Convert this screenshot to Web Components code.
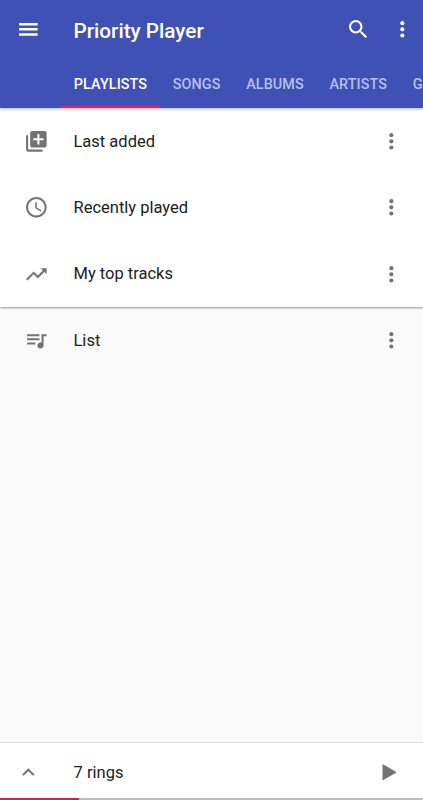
<!DOCTYPE html>
<html lang="en">
<head>
<meta charset="UTF-8">
<title>Priority Player</title>
<style>
  body { margin: 0; font-family: Roboto, 'Liberation Sans', sans-serif; }
</style>
</head>
<body>
<player-app></player-app>

<script>
const ICONS = {
  menu: '<path d="M3 18.2h18v-2.4H3v2.4zm0-5h18v-2.4H3v2.4zm0-7.4v2.4h18V5.8H3z"/>',
  search: '<path d="M15.5 14h-.79l-.28-.27C15.41 12.59 16 11.11 16 9.5 16 5.91 13.09 3 9.5 3S3 5.91 3 9.5 5.91 16 9.5 16c1.61 0 3.09-.59 4.23-1.57l.27.28v.79l5 4.99L20.49 19l-4.99-5zm-6 0C7.01 14 5 11.99 5 9.5S7.01 5 9.5 5 14 7.01 14 9.5 11.99 14 9.5 14z"/>',
  more: '<circle cx="12" cy="6" r="2"/><circle cx="12" cy="12" r="2"/><circle cx="12" cy="18" r="2"/>',
  add: '<path d="M4 6H2v14c0 1.1.9 2 2 2h14v-2H4V6zm16-4H8c-1.1 0-2 .9-2 2v12c0 1.1.9 2 2 2h12c1.1 0 2-.9 2-2V4c0-1.1-.9-2-2-2zm-1 9h-4v4h-2v-4H9V9h4V5h2v4h4v2z"/>',
  clock: '<path d="M11.99 2C6.47 2 2 6.48 2 12s4.47 10 9.99 10C17.52 22 22 17.52 22 12S17.52 2 11.99 2zM12 20c-4.42 0-8-3.58-8-8s3.58-8 8-8 8 3.58 8 8-3.58 8-8 8zm.5-13H11v6l5.25 3.15.75-1.23-4.5-2.67z"/>',
  trending: '<path d="M16 6l2.29 2.29-4.88 4.88-4-4L2 16.59 3.41 18l6-6 4 4 6.3-6.29L22 12V6z"/>',
  queue: '<path d="M15 6H3v2h12V6zm0 4H3v2h12v-2zM3 16h8v-2H3v2zM17 6v8.18c-.31-.11-.65-.18-1-.18-1.66 0-3 1.34-3 3s1.34 3 3 3 3-1.34 3-3V8h3V6h-5z"/>',
  up: '<path d="M12 8l-6 6 1.41 1.41L12 10.83l4.59 4.58L18 14z"/>',
  play: '<path d="M8 5v14l12-7z"/>'
};

class PlayerIcon extends HTMLElement {
  connectedCallback() {
    const shadow = this.shadowRoot || this.attachShadow({ mode: 'open' });
    shadow.innerHTML = `<style>
      :host { display: block; flex: none; width: 24.7px; height: 24.7px; }
      svg { display: block; width: 100%; height: 100%; fill: currentColor; }
    </style>
    <svg viewBox="0 0 24 24">${ICONS[this.getAttribute('name')] || ''}</svg>`;
  }
}

class AppHeader extends HTMLElement {
  connectedCallback() {
    const shadow = this.attachShadow({ mode: 'open' });
    shadow.innerHTML = `<style>
      :host { display: flex; flex-direction: column; height: 107.5px; background: #3f51b5; color: #fff; box-shadow: 0 1px 3px rgba(0,0,0,.3); overflow: hidden; }
      .wrap { box-sizing: border-box; display: flex; align-items: center; height: 59px; padding: 0 8.5px 0 15.7px; }
      h1 { flex: 1; margin: 2px 0 0 33.2px; font-size: 20.7px; font-weight: 500; line-height: 26px; white-space: nowrap; }
      .search { margin-right: 19.3px; }
    </style>
    <div class="wrap">
      <player-icon name="menu"></player-icon>
      <h1><slot name="title"></slot></h1>
      <player-icon class="search" name="search"></player-icon>
      <player-icon name="more"></player-icon>
    </div>
    <slot></slot>`;
  }
}

class TabBar extends HTMLElement {
  connectedCallback() {
    const shadow = this.attachShadow({ mode: 'open' });
    shadow.innerHTML = `<style>
      :host { display: flex; flex: 1; padding-left: 61px; overflow: hidden; }
    </style><slot></slot>`;
  }
}

class TabItem extends HTMLElement {
  connectedCallback() {
    const shadow = this.attachShadow({ mode: 'open' });
    shadow.innerHTML = `<style>
      :host { box-sizing: border-box; display: flex; flex: none; align-items: center; padding: 3.5px 12.8px 0; border-bottom: 2.5px solid transparent; color: #b7bfec; font-size: 14.4px; font-weight: 500; letter-spacing: .09px; white-space: nowrap; }
      :host([active]) { color: #fff; border-color: #e91e63; }
    </style><slot></slot>`;
  }
}

class PlaylistRow extends HTMLElement {
  connectedCallback() {
    const shadow = this.attachShadow({ mode: 'open' });
    shadow.innerHTML = `<style>
      :host { box-sizing: border-box; display: flex; align-items: center; height: 66.2px; padding: 0 19.3px 0 24px; color: #737373; }
      .label { flex: 1; margin-left: 24.8px; padding-top: 1px; color: #212121; font-size: 16.5px; line-height: 22px; }
    </style>
    <player-icon name="${this.getAttribute('icon')}"></player-icon>
    <span class="label"><slot></slot></span>
    <player-icon name="more"></player-icon>`;
  }
}

class NowPlaying extends HTMLElement {
  connectedCallback() {
    const shadow = this.attachShadow({ mode: 'open' });
    shadow.innerHTML = `<style>
      :host { box-sizing: border-box; display: flex; flex-direction: column; height: 58.5px; border-top: 1px solid #dcdcdc; background: #fff; color: #737373; }
      .wrap { flex: 1; display: flex; align-items: center; padding: 4.5px 21.7px 0 15.7px; }
      .label { flex: 1; margin-left: 33.2px; padding-top: 1px; color: #212121; font-size: 16.5px; line-height: 22px; }
      .play { width: 28.5px; height: 28.5px; }
      .bar { height: 2.5px; background: #bdbdbd; }
      .fill { width: 78.5px; height: 100%; background: #d81b60; }
    </style>
    <div class="wrap">
      <player-icon name="up"></player-icon>
      <span class="label"><slot></slot></span>
      <player-icon class="play" name="play"></player-icon>
    </div>
    <div class="bar"><div class="fill"></div></div>`;
  }
}

class PlayerApp extends HTMLElement {
  connectedCallback() {
    const shadow = this.attachShadow({ mode: 'open' });
    shadow.innerHTML = `<style>
      :host { display: flex; flex-direction: column; height: 800px; background: #fafafa; overflow: hidden; }
      app-header { flex: none; z-index: 1; }
      .auto { box-sizing: border-box; flex: none; height: 199.5px; padding-top: 1px; background: #fff; box-shadow: 0 1px 2px rgba(0,0,0,.4); }
      .custom { flex: 1; }
      now-playing { flex: none; }
    </style>
    <app-header>
      <span slot="title">Priority Player</span>
      <tab-bar>
        <tab-item active>PLAYLISTS</tab-item>
        <tab-item>SONGS</tab-item>
        <tab-item>ALBUMS</tab-item>
        <tab-item>ARTISTS</tab-item>
        <tab-item>GENRES</tab-item>
      </tab-bar>
    </app-header>
    <div class="auto">
      <playlist-row icon="add">Last added</playlist-row>
      <playlist-row icon="clock">Recently played</playlist-row>
      <playlist-row icon="trending">My top tracks</playlist-row>
    </div>
    <div class="custom">
      <playlist-row icon="queue">List</playlist-row>
    </div>
    <now-playing>7 rings</now-playing>`;
  }
}

customElements.define('player-icon', PlayerIcon);
customElements.define('app-header', AppHeader);
customElements.define('tab-bar', TabBar);
customElements.define('tab-item', TabItem);
customElements.define('playlist-row', PlaylistRow);
customElements.define('now-playing', NowPlaying);
customElements.define('player-app', PlayerApp);
</script>
</body>
</html>
